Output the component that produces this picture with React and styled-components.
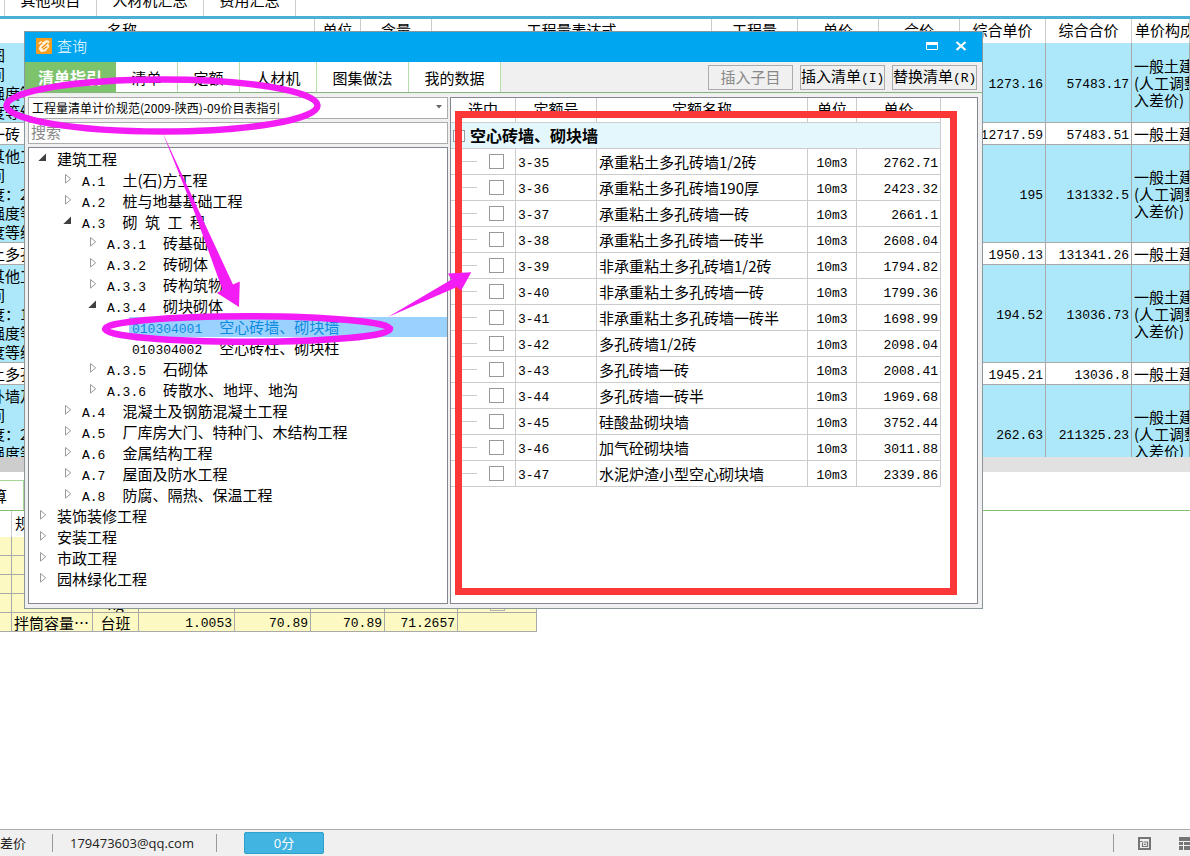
import React from 'react'
import styled, {createGlobalStyle} from 'styled-components'

const projectTabs = [
    {label: '其他项目', width: 93},
    {label: '人材机汇总', width: 107},
    {label: '费用汇总', width: 92},
]

const billRows = [
    {note: ['图', '间', '强度等级', '度等级'], rate: '1273.16', total: '57483.17', height: 80, filled: true},
    {note: ['一砖'], rate: '12717.59', total: '57483.51', height: 22},
    {note: ['其他工', '间', '度：2', '强度等', '度等级'], rate: '195', total: '131332.5', height: 98, filled: true},
    {note: ['上多孔'], rate: '1950.13', total: '131341.26', height: 22},
    {note: ['其他工', '间', '度：1', '强度等', '度等级'], rate: '194.52', total: '13036.73', height: 98, filled: true},
    {note: ['土多孔'], rate: '1945.21', total: '13036.8', height: 22},
    {note: ['外墙及', '间', '度：2', '强度等', '度等级'], rate: '262.63', total: '211325.23', height: 98, filled: true},
]

const machineRows = [
    ['', '', '', '', '', '', ''],
    ['', '', '', '', '', '', ''],
    ['', '', '', '', '', '', ''],
    ['', '', 'kg', '0.4080', '270.67', '270.67', '2700.75'],
    ['', '拌筒容量…', '台班', '1.0053', '70.89', '70.89', '71.2657'],
]

const dialogTabs = [
    {label: '清单指引', width: 91, active: true},
    {label: '清单', width: 62},
    {label: '定额', width: 62},
    {label: '人材机', width: 77},
    {label: '图集做法', width: 92},
    {label: '我的数据', width: 92},
]

const treeItems = [
    {depth: 0, label: '建筑工程', open: true},
    {depth: 1, code: 'A.1', label: '土(石)方工程'},
    {depth: 1, code: 'A.2', label: '桩与地基基础工程'},
    {depth: 1, code: 'A.3', label: '砌\u2002筑\u2002工\u2002程', open: true},
    {depth: 2, code: 'A.3.1', label: '砖基础'},
    {depth: 2, code: 'A.3.2', label: '砖砌体'},
    {depth: 2, code: 'A.3.3', label: '砖构筑物'},
    {depth: 2, code: 'A.3.4', label: '砌块砌体', open: true},
    {depth: 3, code: '010304001', label: '空心砖墙、砌块墙', leaf: true, selected: true},
    {depth: 3, code: '010304002', label: '空心砖柱、砌块柱', leaf: true},
    {depth: 2, code: 'A.3.5', label: '石砌体'},
    {depth: 2, code: 'A.3.6', label: '砖散水、地坪、地沟'},
    {depth: 1, code: 'A.4', label: '混凝土及钢筋混凝土工程'},
    {depth: 1, code: 'A.5', label: '厂库房大门、特种门、木结构工程'},
    {depth: 1, code: 'A.6', label: '金属结构工程'},
    {depth: 1, code: 'A.7', label: '屋面及防水工程'},
    {depth: 1, code: 'A.8', label: '防腐、隔热、保温工程'},
    {depth: 0, label: '装饰装修工程'},
    {depth: 0, label: '安装工程'},
    {depth: 0, label: '市政工程'},
    {depth: 0, label: '园林绿化工程'},
]

const quotas = [
    ['3-35', '承重粘土多孔砖墙1/2砖', '2762.71'],
    ['3-36', '承重粘土多孔砖墙190厚', '2423.32'],
    ['3-37', '承重粘土多孔砖墙一砖', '2661.1'],
    ['3-38', '承重粘土多孔砖墙一砖半', '2608.04'],
    ['3-39', '非承重粘土多孔砖墙1/2砖', '1794.82'],
    ['3-40', '非承重粘土多孔砖墙一砖', '1799.36'],
    ['3-41', '非承重粘土多孔砖墙一砖半', '1698.99'],
    ['3-42', '多孔砖墙1/2砖', '2098.04'],
    ['3-43', '多孔砖墙一砖', '2008.41'],
    ['3-44', '多孔砖墙一砖半', '1969.68'],
    ['3-45', '硅酸盐砌块墙', '3752.44'],
    ['3-46', '加气砼砌块墙', '3011.88'],
    ['3-47', '水泥炉渣小型空心砌块墙', '2339.86'],
]

const TreeArrow = ({open}) => (
    <svg width="10" height="12" viewBox="0 0 10 12" aria-hidden="true">
        {open
            ? <path d="M9 1.5V9H1.3z" fill="#404040" />
            : <path d="M3.5 1.500v8.600L8.700 5.800z" fill="#fff" stroke="#9a9a9a" />}
    </svg>
)

const BillTable = () => (
    <BillArea>
        <Grid $shift={70}>
            <colgroup>
                <col width="385" />
                <col width="46" />
                <col width="71" />
                <col width="280" />
                <col width="86" />
                <col width="81" />
                <col width="81" />
                <col width="86" />
                <col width="86" />
                <col />
            </colgroup>
            <thead>
                <tr>
                    {['名称', '单位', '含量', '工程量表达式', '工程量', '单价', '合价', '综合单价', '综合合价'].map(h => <Head key={h} $height={24}>{h}</Head>)}
                    <Head $align="left" $height={24}>单价构成文件</Head>
                </tr>
            </thead>
            <tbody>
                {billRows.map((row, i) => (
                    <BillRow key={i} $filled={row.filled}>
                        <NoteCell $height={row.height}>
                            {row.note.map((line, n) => <NoteLine key={n}>{line}</NoteLine>)}
                        </NoteCell>
                        <Cell /><Cell /><Cell /><Cell /><Cell /><Cell />
                        <Cell $align="right"><Num>{row.rate}</Num></Cell>
                        <Cell $align="right"><Num>{row.total}</Num></Cell>
                        <Cell>
                            <FeeLine>一般土建工程</FeeLine>
                            {row.filled && <FeeLine>(人工调整计</FeeLine>}
                            {row.filled && <FeeLine>入差价)</FeeLine>}
                        </Cell>
                    </BillRow>
                ))}
            </tbody>
        </Grid>
    </BillArea>
)

const MachineTable = () => (
    <MachineArea>
        <Grid>
            <colgroup>
                <col width="12" />
                <col width="81" />
                <col width="46" />
                <col width="96" />
                <col width="76" />
                <col width="74" />
                <col width="73" />
                <col width="79" />
            </colgroup>
            <thead>
                <tr>
                    <Head $height={26} />
                    <Head $height={26} $align="left">规格及型号</Head>
                </tr>
            </thead>
            <tbody>
                {machineRows.map((row, i) => (
                    <MachineRow key={i}>
                        {row.map((value, n) => (
                            <MachineCell key={n} $height={19} $align={n > 2 ? 'right' : n === 2 ? 'center' : 'left'}>
                                {n > 2 ? <Num>{value}</Num> : value}
                            </MachineCell>
                        ))}
                        <MachineCell $height={19}>
                            {i === 3 && <SmallCheck type="checkbox" aria-label="暂估" />}
                        </MachineCell>
                    </MachineRow>
                ))}
            </tbody>
        </Grid>
    </MachineArea>
)

const GuideTree = () => (
    <Tree>
        {treeItems.map(item => (
            <TreeRow key={(item.code || '') + item.label} $depth={item.depth}>
                {!item.leaf && <Toggle type="button" aria-label={item.label}><TreeArrow open={item.open} /></Toggle>}
                <TreeLabel $selected={item.selected} $leaf={item.leaf}>
                    {item.code && <Code>{item.code}</Code>}
                    <span>{item.label}</span>
                </TreeLabel>
            </TreeRow>
        ))}
    </Tree>
)

const QuotaTable = () => (
    <QuotaPanel>
        <Grid>
            <colgroup>
                <col width="65" />
                <col width="81" />
                <col />
                <col width="49" />
                <col width="84" />
            </colgroup>
            <thead>
                <tr>
                    {['选中', '定额号', '定额名称', '单位', '单价'].map(h => <QuotaHead key={h}>{h}</QuotaHead>)}
                </tr>
            </thead>
            <tbody>
                <tr>
                    <GroupCell colSpan="5">
                        <Group>
                            <Expander type="button" aria-label="折叠">-</Expander>
                            空心砖墙、砌块墙
                        </Group>
                    </GroupCell>
                </tr>
                {quotas.map(([code, name, price]) => (
                    <tr key={code}>
                        <QuotaCell>
                            <Pick>
                                <Branch />
                                <Check type="checkbox" aria-label={code} />
                            </Pick>
                        </QuotaCell>
                        <QuotaCell><Num>{code}</Num></QuotaCell>
                        <QuotaCell>{name}</QuotaCell>
                        <QuotaCell $align="center"><Num>10m3</Num></QuotaCell>
                        <QuotaCell $align="right"><Num>{price}</Num></QuotaCell>
                    </tr>
                ))}
            </tbody>
        </Grid>
    </QuotaPanel>
)

const QueryDialog = () => (
    <Dialog role="dialog" aria-label="查询">
        <TitleBar>
            <svg width="16" height="16" viewBox="0 0 16 16" aria-hidden="true">
                <rect width="16" height="16" rx="1" fill="#f59d1e" />
                <path d="M2.2 5.6 5 3l1.4 1.5 4-2.6 3.4 1.3-1.6 2.5 1.2 3-3.7 4.5-4.8.8-2.2-3 1.3-3.4z" fill="#fff3dc" />
                <path d="M3.2 7.2 6.3 5m-.6 5.3 5.8-5.5M7 11.6l4.200-3.200" fill="none" stroke="#f08c0a" strokeWidth="1.200" />
            </svg>
            <Title>查询</Title>
            <WindowButton type="button" aria-label="最大化">
                <svg width="12" height="10" viewBox="0 0 12 10">
                    <path d="M.5 1.5h11v7H.5z" fill="none" stroke="#fff" />
                    <path d="M0 1h12v3H0z" fill="#fff" />
                </svg>
            </WindowButton>
            <WindowButton type="button" aria-label="关闭">
                <svg width="12" height="10" viewBox="0 0 12 10">
                    <path d="m1.5 1 9 8m0-8-9 8" stroke="#fff" strokeWidth="2.2" />
                </svg>
            </WindowButton>
        </TitleBar>
        <Toolbar>
            {dialogTabs.map(tab => (
                <DialogTab key={tab.label} type="button" $width={tab.width} $active={tab.active}>{tab.label}</DialogTab>
            ))}
            <Actions>
                <ActionButton type="button" disabled>插入子目</ActionButton>
                <ActionButton type="button">插入清单<Num>(I)</Num></ActionButton>
                <ActionButton type="button">替换清单<Num>(R)</Num></ActionButton>
            </Actions>
        </Toolbar>
        <Panes>
            <Left>
                <SelectWrap>
                    <Select aria-label="清单规范">
                        <option>工程量清单计价规范(2009-陕西)-09价目表指引</option>
                    </Select>
                    <svg width="6" height="4" viewBox="0 0 6 4" aria-hidden="true"><path d="M0 0h6L3 3.5z" fill="#666" /></svg>
                </SelectWrap>
                <Search type="text" placeholder="搜索" aria-label="搜索" />
                <GuideTree />
            </Left>
            <QuotaTable />
        </Panes>
    </Dialog>
)

const Marks = () => (
    <MarkLayer width="1190" height="856" viewBox="0 0 1190 856" aria-hidden="true">
        <rect x="458.5" y="114.5" width="495" height="477" fill="none" stroke="#fc3737" strokeWidth="7" />
        <g fill="none" stroke="#f41cf4" strokeWidth="6.5">
            <ellipse cx="162" cy="105.5" rx="155.5" ry="26" />
            <ellipse cx="247.5" cy="329" rx="142.5" ry="12.8" />
        </g>
        <g fill="#f41cf4">
            <path d="M162.5 132.5 233 284.5l6.8-3-.8 25.5-22-14 5.5-3.2L194 211z" />
            <path d="M388 317 451.500 279.500 448 273.500 471.300 272.200 461 290.700 457 287z" />
        </g>
    </MarkLayer>
)

const App = () => {
    return (
        <Page>
            <GlobalStyle />
            <ProjectTabs>
                {projectTabs.map(tab => <ProjectTab key={tab.label} type="button" $width={tab.width}>{tab.label}</ProjectTab>)}
            </ProjectTabs>
            <BillTable />
            <ScrollTrack><ScrollThumb /></ScrollTrack>
            <LowerTabs><LowerTab type="button">算</LowerTab></LowerTabs>
            <MachineTable />
            <StatusBar>
                <StatusText $width={52}>差价</StatusText>
                <Divider />
                <Account>179473603@qq.com</Account>
                <Divider />
                <Score type="button">0分</Score>
                <StatusIcons>
                    <Divider />
                    <svg width="13" height="13" viewBox="0 0 13 13" aria-hidden="true">
                        <path d="M1 1h11v11H1z" fill="none" stroke="#757575" strokeWidth="2" />
                        <path d="M1 4.5h3.500M4.500 5.500v4h5v-4.500h-4M6 7.300h2" fill="none" stroke="#757575" strokeWidth="1.200" />
                    </svg>
                    <svg width="13" height="13" viewBox="0 0 13 13" aria-hidden="true">
                        <path d="M0 0h13v4H0zM0 5h4v3H0zM0 9h4v4H0zM5 5h8v3H5zM5 9h8v4H5z" fill="#757575" />
                    </svg>
                </StatusIcons>
            </StatusBar>
            <QueryDialog />
            <Marks />
        </Page>
    )
}

//styled components
const GlobalStyle = createGlobalStyle`
    * {
        box-sizing: border-box;
    }

    body {
        margin: 0;
        color: #000;
        background: #fff;
        font: 400 15px/19px 'Noto Sans CJK SC', sans-serif;
    }

    button, input, select {
        font: inherit;
        color: inherit;
        margin: 0;
        padding: 0;
    }

    svg {
        display: block;
        flex: none;
    }
`

const Page = styled.div`
    position: relative;
    display: flex;
    flex-direction: column;
    min-height: 100vh;
    overflow: hidden;
`

const Num = styled.span`
    font-family: 'Liberation Mono', monospace;
    font-size: 13px;
`

const ProjectTabs = styled.div`
    display: flex;
    align-items: flex-end;
    height: 19px;
    padding-left: 4px;
    overflow: hidden;
    border-bottom: 3px solid #4cb0d6;
`

const ProjectTab = styled.button`
    flex: none;
    width: ${p => p.$width}px;
    height: 30px;
    padding-bottom: 3px;
    background: #fff;
    border: 0;
    border-right: 1px solid #ccc;

    &:first-child {
        border-left: 1px solid #ccc;
    }
`

const Grid = styled.table`
    width: calc(100% + ${p => p.$shift || 0}px);
    margin-left: -${p => p.$shift || 0}px;
    table-layout: fixed;
    border-collapse: separate;
    border-spacing: 0;
`

const Head = styled.th`
    height: ${p => p.$height}px;
    padding: 0 3px 3px;
    font-weight: 400;
    text-align: ${p => p.$align || 'center'};
    white-space: nowrap;
    overflow: hidden;
    border-right: 1px solid #ccc;
`

const Cell = styled.td`
    height: ${p => p.$height}px;
    padding: 0 2px;
    overflow: hidden;
    white-space: nowrap;
    line-height: 17px;
    text-align: ${p => p.$align || 'left'};
    border-right: 1px solid #a9a9a9;
    border-bottom: 1px solid #a9a9a9;
`

const BillArea = styled.div`
    height: 438px;
    overflow: hidden;
`

const BillRow = styled.tr`
    background: ${p => p.$filled ? '#ace8fa' : '#fff'};
`

const NoteCell = styled(Cell)`
    padding-left: 60px;
`

const NoteLine = styled.div`
    line-height: 19px;
`

const FeeLine = styled.div`
    line-height: 17px;
`

const ScrollTrack = styled.div`
    height: 15px;
    background: #e1e1e1;
`

const ScrollThumb = styled.div`
    width: 60%;
    height: 100%;
    background: #cdcdcd;
`

const LowerTabs = styled.div`
    display: flex;
    padding-top: 8px;
    border-bottom: 1px solid #82c06e;
`

const LowerTab = styled.button`
    width: 24px;
    height: 30px;
    background: #fff;
    border: 1px solid #a4d694;
    border-width: 1px 1px 0 0;
    text-align: left;
    text-indent: -8px;
    overflow: hidden;
`

const MachineArea = styled.div`
    width: 537px;
`

const MachineRow = styled.tr`
    background: #fcfac2;
`

const MachineCell = styled(Cell)`
    line-height: 15px;
`

const SmallCheck = styled.input`
    display: block;
    appearance: none;
    width: 15px;
    height: 15px;
    margin: 0 auto;
    border: 1px solid #b5b5b5;
`

const StatusBar = styled.footer`
    display: flex;
    align-items: center;
    height: 27px;
    margin-top: auto;
    background: #f0f0f0;
    border-top: 1px solid #acacac;
    font: 400 13px/19px 'Open Sans', 'Noto Sans CJK SC', sans-serif;
    color: #222;
    overflow: hidden;
`

const StatusText = styled.span`
    width: ${p => p.$width}px;
`

const Divider = styled.span`
    flex: none;
    width: 1px;
    height: 18px;
    background: #999;
`

const Account = styled.span`
    width: 163px;
    padding-left: 17px;
`

const Score = styled.button`
    width: 80px;
    height: 22px;
    margin-left: 27px;
    color: #fff;
    background: #42b4e1;
    border: 1px solid #2f9fce;
    border-radius: 2px;
`

const StatusIcons = styled.div`
    display: flex;
    align-items: center;
    gap: 28px;
    margin-left: auto;
    margin-right: -2px;

    ${Divider} {
        margin-right: -4px;
    }
`

const Dialog = styled.section`
    position: absolute;
    top: 31px;
    left: 24px;
    right: 207px;
    background: #f0f0f0;
    border: 1px solid #8c979c;
`

const TitleBar = styled.header`
    display: flex;
    align-items: center;
    height: 30px;
    padding: 0 15px 2px 11px;
    color: #fff;
    background: #00a6f0;
`

const Title = styled.span`
    flex: 1;
    padding: 0 0 1px 5px;
    font-weight: 300;
`

const WindowButton = styled.button`
    margin-left: 17px;
    background: none;
    border: 0;
`

const Toolbar = styled.div`
    display: flex;
    height: 31px;
    border-bottom: 1px solid #8fae8b;
`

const DialogTab = styled.button`
    flex: none;
    width: ${p => p.$width}px;
    color: ${p => p.$active ? '#fff' : '#000'};
    background: ${p => p.$active ? '#7dc36b' : '#fff'};
    border: 0;
    border-right: 1px solid ${p => p.$active ? '#7dc36b' : '#b5deaa'};
    font-size: ${p => p.$active ? 16 : 15}px;
    font-weight: ${p => p.$active ? 700 : 400};
`

const Actions = styled.div`
    display: flex;
    gap: 7px;
    margin-left: auto;
    padding: 3px 5px 2px 0;
`

const ActionButton = styled.button`
    width: 85px;
    padding-bottom: 2px;
    background: #f0f0f0;
    border: 1px solid #acacac;
    white-space: nowrap;

    &:disabled {
        color: #888;
    }
`

const Panes = styled.div`
    display: flex;
    gap: 2px;
    padding: 3px 4px 4px 3px;
    border-top: 1px solid #e4f4df;
`

const Left = styled.div`
    display: flex;
    flex-direction: column;
    gap: 3px;
    flex: 0 0 420px;
`

const SelectWrap = styled.div`
    display: flex;
    align-items: center;
    height: 22px;
    padding: 0 5px 2px 0;
    background: #fff;
    border: 1px solid #acacac;
`

const Select = styled.select`
    appearance: none;
    flex: 1;
    padding-left: 3px;
    background: #fff;
    border: 0;
    font-size: 12px;
`

const Search = styled.input`
    height: 22px;
    padding: 0 2px 3px;
    background: #fff;
    border: 1px solid #acacac;

    &::placeholder {
        color: #888;
    }
`

const Tree = styled.ul`
    flex: 1;
    margin: 0;
    padding: 0 0 14px;
    list-style: none;
    background: #fff;
    border: 1px solid #828790;
`

const TreeRow = styled.li`
    display: flex;
    align-items: center;
    height: 21px;
    padding-left: ${p => 8 + p.$depth * 25}px;
`

const Toggle = styled.button`
    width: 17px;
    padding-bottom: 2px;
    background: none;
    border: 0;
`

const TreeLabel = styled.div`
    flex: 1;
    display: flex;
    align-items: baseline;
    height: 20px;
    margin-left: ${p => p.$leaf ? 17 : 0}px;
    padding-left: 3px;
    white-space: nowrap;
    color: ${p => p.$selected ? '#0c8ae0' : '#000'};
    background: ${p => p.$selected ? '#99d1ff' : 'transparent'};
`

const Code = styled(Num)`
    margin-right: 17px;
`

const QuotaPanel = styled.div`
    flex: 1;
    min-width: 0;
    padding-right: 36px;
    background: #fff;
    border: 1px solid #828790;
`

const QuotaHead = styled(Head)`
    height: 25px;
    border-bottom: 1px solid #ccc;
`

const QuotaCell = styled(Cell)`
    height: 26px;
    border-color: #ccc;
`

const GroupCell = styled(QuotaCell)`
    font-size: 16px;
    font-weight: 700;
    background: #e3f7fd;
`

const Group = styled.div`
    display: flex;
    align-items: center;
    gap: 5px;
`

const Expander = styled.button`
    width: 12px;
    height: 12px;
    line-height: 8px;
    font-weight: 400;
    background: #fff;
    border: 1px solid #999;
`

const Pick = styled.div`
    display: flex;
    align-items: center;
    gap: 12px;
    padding-left: 9px;
`

const Branch = styled.span`
    width: 15px;
    height: 1px;
    background: #ccc;
`

const Check = styled.input`
    appearance: none;
    width: 15px;
    height: 15px;
    background: #fff;
    border: 1px solid #999;
`

const MarkLayer = styled.svg`
    position: absolute;
    top: 0;
    left: 0;
    pointer-events: none;
`

export default App
